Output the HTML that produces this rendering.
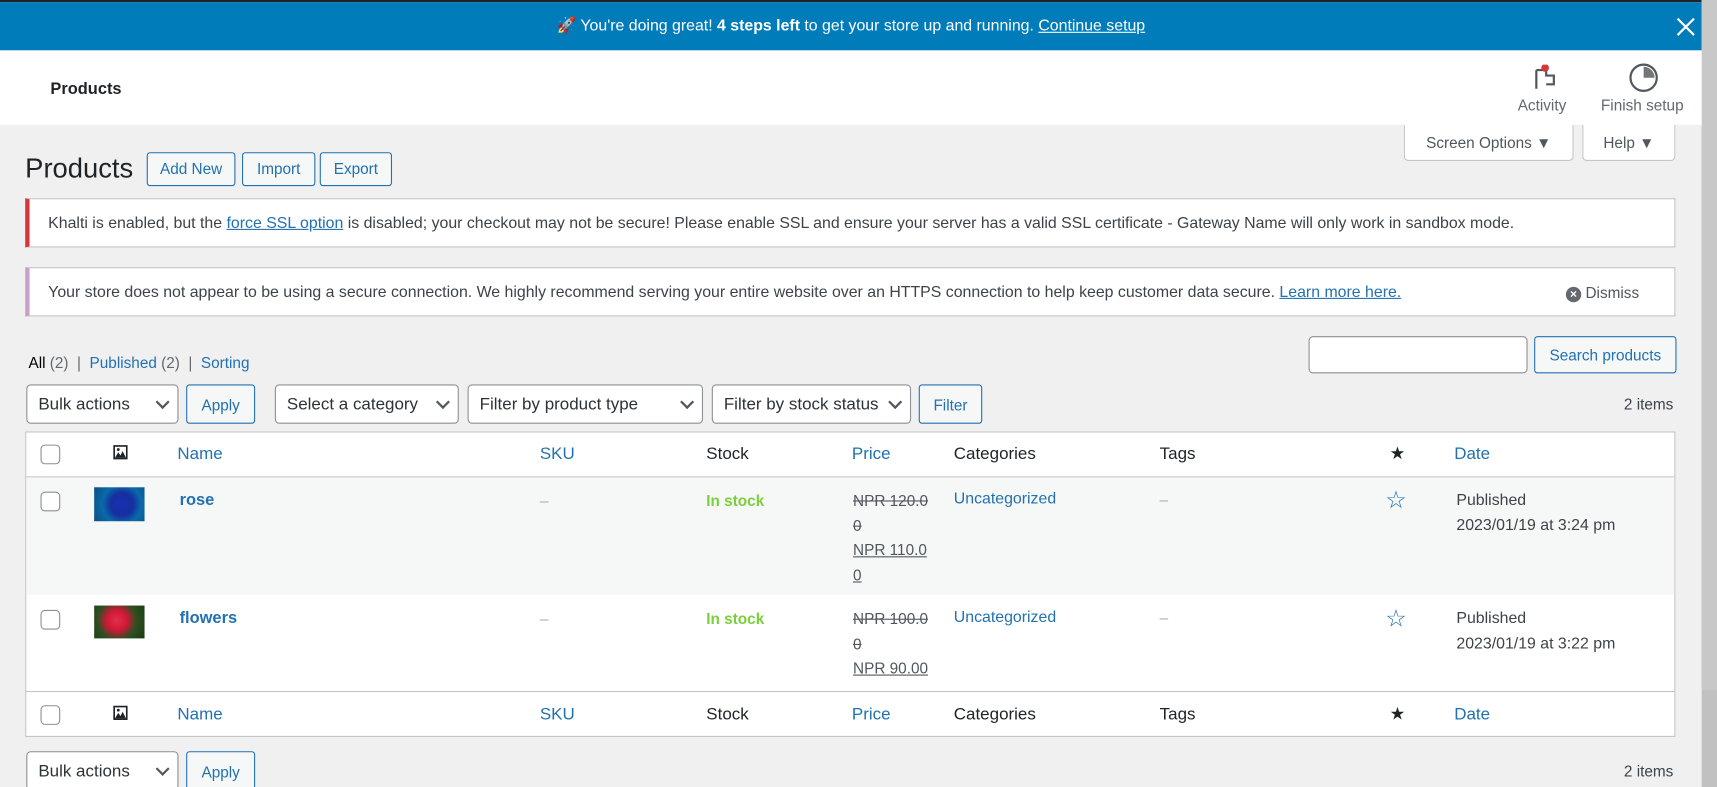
<!DOCTYPE html>
<html><head><meta charset="utf-8"><style>
html,body{margin:0;padding:0;overflow:hidden;width:1717px;height:787px;background:#f0f0f1}
#w{position:absolute;left:0;top:0;width:1568px;height:719px;transform:scale(1.09503);transform-origin:0 0;font-family:"Liberation Sans",sans-serif;font-size:14px;color:#3c434a;background:#f0f0f1;overflow:hidden}
.a{position:absolute;white-space:nowrap}
.lk{color:#2271b1}
.btn{position:absolute;border:1px solid #2271b1;color:#2271b1;background:#f6f7f7;border-radius:3px;box-sizing:border-box;text-align:center;font-size:14px}
.sel{position:absolute;border:1px solid #8c8f94;background:#fff;border-radius:4px;box-sizing:border-box;font-size:15.5px;color:#2c3338;padding-left:10px}
.sel:after{content:"";position:absolute;right:9px;top:50%;width:7px;height:7px;border-right:2px solid #50575e;border-bottom:2px solid #50575e;transform:translateY(-70%) rotate(45deg)}
.cb{position:absolute;width:16px;height:16px;border:1px solid #8c8f94;border-radius:4px;background:#fff}
.th{position:absolute;font-size:15.5px}
</style></head><body><div id="w">
<div class="a" style="left:0;top:0;width:1554px;height:2px;background:#1d2327"></div>
<div class="a" style="left:0;top:2px;width:1554px;height:44px;background:#007cba;color:#fff;font-size:14.5px;line-height:44px;text-align:center">🚀 You're doing great! <b>4 steps left</b> to get your store up and running. <u>Continue setup</u></div>
<svg class="a" style="left:1531px;top:16px" width="17" height="17"><path d="M1 1L16 16M16 1L1 16" stroke="#fff" stroke-width="2"/></svg>
<div class="a" style="left:1554px;top:0;width:14px;height:719px;background:#c1c1c1"></div>
<div class="a" style="left:1554px;top:0;width:14px;height:630px;background:#c8c8c8"></div>
<div class="a" style="left:0;top:46px;width:1554px;height:68px;background:#fff"></div>
<div class="a" style="left:46px;top:73px;font-size:15px;font-weight:bold;color:#1d2327">Products</div>
<svg class="a" style="left:1400px;top:59px" width="24" height="24"><path d="M3 5V22M3 5H12V10H19V18H12" stroke="#50575e" stroke-width="2" fill="none"/><circle cx="11" cy="3" r="3.5" fill="#d63638"/></svg>
<div class="a" style="left:1386px;top:88px;font-size:14px;color:#646970">Activity</div>
<svg class="a" style="left:1486px;top:57px" width="30" height="30"><circle cx="15" cy="14" r="12" stroke="#50575e" stroke-width="2" fill="none"/><path d="M15 4A10 10 0 0 1 25 14H15Z" fill="#757575"/></svg>
<div class="a" style="left:1462px;top:88px;font-size:14px;color:#646970">Finish setup</div>
<div class="a" style="left:1282px;top:114px;width:155px;height:33px;background:#fff;border:1px solid #c3c4c7;border-top:0;border-radius:0 0 4px 4px;box-sizing:border-box;font-size:14px;line-height:32px;text-align:center;color:#50575e">Screen Options ▼</div>
<div class="a" style="left:1445px;top:114px;width:85px;height:33px;background:#fff;border:1px solid #c3c4c7;border-top:0;border-radius:0 0 4px 4px;box-sizing:border-box;font-size:14px;line-height:32px;text-align:center;color:#50575e">Help ▼</div>
<div class="a" style="left:23px;top:140px;font-size:25px;color:#1d2327">Products</div>
<div class="btn" style="left:134px;top:139px;width:81px;height:31px;line-height:29px">Add New</div>
<div class="btn" style="left:221px;top:139px;width:67px;height:31px;line-height:29px">Import</div>
<div class="btn" style="left:292px;top:139px;width:66px;height:31px;line-height:29px">Export</div>
<div class="a" style="left:23px;top:181px;width:1507px;height:45px;background:#fff;border:1px solid #c3c4c7;border-left:4px solid #d63638;box-sizing:border-box;line-height:45px;padding-left:17px;font-size:14.5px">Khalti is enabled, but the <u class="lk">force SSL option</u> is disabled; your checkout may not be secure! Please enable SSL and ensure your server has a valid SSL certificate - Gateway Name will only work in sandbox mode.</div>
<div class="a" style="left:23px;top:244px;width:1507px;height:45px;background:#fff;border:1px solid #c3c4c7;border-left:4px solid #c9a0c8;box-sizing:border-box;line-height:45px;padding-left:17px;font-size:14.5px">Your store does not appear to be using a secure connection. We highly recommend serving your entire website over an HTTPS connection to help keep customer data secure. <u class="lk">Learn more here.</u></div>
<div class="a" style="left:1430px;top:259px;font-size:14px;color:#50575e"><span style="display:inline-block;width:14px;height:14px;border-radius:50%;background:#646970;color:#fff;font-size:11px;line-height:14px;text-align:center;font-weight:bold">×</span> Dismiss</div>
<div class="a" style="left:26px;top:323px;font-size:14px;color:#646970"><b style="color:#000;font-weight:normal">All</b> (2) &nbsp;| &nbsp;<span class="lk">Published</span> (2) &nbsp;| &nbsp;<span class="lk">Sorting</span></div>
<div class="a" style="left:1195px;top:307px;width:200px;height:34px;border:1px solid #8c8f94;border-radius:4px;background:#fff;box-sizing:border-box"></div>
<div class="btn" style="left:1401px;top:307px;width:130px;height:34px;line-height:32px">Search products</div>
<div class="sel" style="left:24px;top:351px;width:139px;height:36px;line-height:36px">Bulk actions</div>
<div class="btn" style="left:170px;top:351px;width:63px;height:36px;line-height:36px">Apply</div>
<div class="sel" style="left:251px;top:351px;width:168px;height:36px;line-height:36px">Select a category</div>
<div class="sel" style="left:427px;top:351px;width:215px;height:36px;line-height:36px">Filter by product type</div>
<div class="sel" style="left:650px;top:351px;width:182px;height:36px;line-height:36px">Filter by stock status</div>
<div class="btn" style="left:839px;top:351px;width:58px;height:36px;line-height:36px">Filter</div>
<div class="a" style="left:1483px;top:361px;font-size:14px">2 items</div>
<div class="a" style="left:23px;top:394px;width:1507px;height:279px;background:#fff;border:1px solid #c3c4c7;box-sizing:border-box"></div>
<div class="a" style="left:24px;top:435px;width:1505px;height:1px;background:#c3c4c7"></div>
<div class="a" style="left:24px;top:436px;width:1505px;height:107px;background:#f6f7f7"></div>
<div class="a" style="left:24px;top:631px;width:1505px;height:1px;background:#c3c4c7"></div>
<div class="cb" style="left:37px;top:406px"></div>
<svg class="a" style="left:103px;top:406px" width="14" height="14"><rect x="0.5" y="0.5" width="13" height="13" fill="#1d2327"/><rect x="2" y="2" width="10" height="10" fill="#fff"/><path d="M2 12L5 7L7 10L9 6L12 12Z" fill="#1d2327"/><circle cx="5" cy="4.5" r="1.3" fill="#1d2327"/></svg>
<div class="th lk" style="left:162px;top:406px">Name</div>
<div class="th lk" style="left:493px;top:406px">SKU</div>
<div class="th" style="left:645px;top:406px;color:#1d2327">Stock</div>
<div class="th lk" style="left:778px;top:406px">Price</div>
<div class="th" style="left:871px;top:406px;color:#1d2327">Categories</div>
<div class="th" style="left:1059px;top:406px;color:#1d2327">Tags</div>
<div class="th" style="left:1269px;top:404px;color:#1d2327;font-size:16px">★</div>
<div class="th lk" style="left:1328px;top:406px">Date</div>
<div class="cb" style="left:37px;top:644px"></div>
<svg class="a" style="left:103px;top:644px" width="14" height="14"><rect x="0.5" y="0.5" width="13" height="13" fill="#1d2327"/><rect x="2" y="2" width="10" height="10" fill="#fff"/><path d="M2 12L5 7L7 10L9 6L12 12Z" fill="#1d2327"/><circle cx="5" cy="4.5" r="1.3" fill="#1d2327"/></svg>
<div class="th lk" style="left:162px;top:644px">Name</div>
<div class="th lk" style="left:493px;top:644px">SKU</div>
<div class="th" style="left:645px;top:644px;color:#1d2327">Stock</div>
<div class="th lk" style="left:778px;top:644px">Price</div>
<div class="th" style="left:871px;top:644px;color:#1d2327">Categories</div>
<div class="th" style="left:1059px;top:644px;color:#1d2327">Tags</div>
<div class="th" style="left:1269px;top:642px;color:#1d2327;font-size:16px">★</div>
<div class="th lk" style="left:1328px;top:644px">Date</div>
<div class="cb" style="left:37px;top:449px"></div>
<div class="a" style="left:86px;top:445px;width:46px;height:31px;background:radial-gradient(circle at 55% 50%,#1a2fb0 0,#1530a0 35%,#0a6aa8 60%,#0c4f80 100%)"></div>
<div class="a lk" style="left:164px;top:448px;font-size:15px;font-weight:bold">rose</div>
<div class="a" style="left:493px;top:449px;color:#a7aaad">–</div>
<div class="a" style="left:645px;top:449px;color:#7ad03a;font-weight:bold">In stock</div>
<div class="a" style="left:779px;top:446px;line-height:22.5px;font-size:14px;color:#50575e"><s>NPR 120.0</s><br><s>0</s><br><u>NPR 110.0</u><br><u>0</u></div>
<div class="a lk" style="left:871px;top:448px;font-size:14.5px">Uncategorized</div>
<div class="a" style="left:1059px;top:448px;color:#a7aaad">–</div>
<div class="a" style="left:1265px;top:444px;font-size:22px;color:#2271b1">☆</div>
<div class="a" style="left:1330px;top:446px;line-height:23px;font-size:14.5px">Published<br>2023/01/19 at 3:24 pm</div>
<div class="cb" style="left:37px;top:557px"></div>
<div class="a" style="left:86px;top:553px;width:46px;height:30px;background:radial-gradient(circle at 45% 45%,#e0304a 0,#d01838 30%,#2a5020 60%,#1a3a14 100%)"></div>
<div class="a lk" style="left:164px;top:556px;font-size:15px;font-weight:bold">flowers</div>
<div class="a" style="left:493px;top:557px;color:#a7aaad">–</div>
<div class="a" style="left:645px;top:557px;color:#7ad03a;font-weight:bold">In stock</div>
<div class="a" style="left:779px;top:554px;line-height:22.5px;font-size:14px;color:#50575e"><s>NPR 100.0</s><br><s>0</s><br><u>NPR 90.00</u></div>
<div class="a lk" style="left:871px;top:556px;font-size:14.5px">Uncategorized</div>
<div class="a" style="left:1059px;top:556px;color:#a7aaad">–</div>
<div class="a" style="left:1265px;top:552px;font-size:22px;color:#2271b1">☆</div>
<div class="a" style="left:1330px;top:554px;line-height:23px;font-size:14.5px">Published<br>2023/01/19 at 3:22 pm</div>
<div class="sel" style="left:24px;top:686px;width:139px;height:36px;line-height:36px">Bulk actions</div>
<div class="btn" style="left:170px;top:686px;width:63px;height:36px;line-height:36px">Apply</div>
<div class="a" style="left:1483px;top:696px">2 items</div>
</div></body></html>
